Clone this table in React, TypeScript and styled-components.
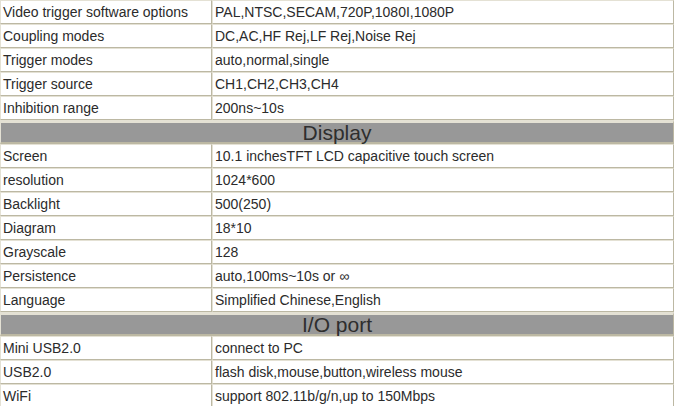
import React from "react";
import styled, { createGlobalStyle } from "styled-components";

const Global = createGlobalStyle`
  html, body { margin: 0; padding: 0; background: #ffffff; }
  body { font-family: "Liberation Sans", Arial, sans-serif; }
`;

const Table = styled.table`
  width: 674px;
  table-layout: fixed;
  border-collapse: separate;
  border-spacing: 0;
  margin-top: 0;
  color: #2b2b2b;
  font-size: 14px;
`;

const Row = styled.tr`
  height: 24px;
`;

const Cell = styled.td`
  box-sizing: border-box;
  height: 24px;
  padding: 0 0 0 2px;
  border-top: 1px solid #e4e1d4;
  border-left: 1px solid #e4e1d4;
  border-right: 1px solid #bcb8a3;
  border-bottom: 1px solid #bcb8a3;
  white-space: nowrap;
  overflow: hidden;
  vertical-align: middle;
  line-height: 16px;
`;

const Section = styled.td`
  box-sizing: border-box;
  height: 24px;
  padding: 0;
  background: #989898;
  text-align: center;
  font-size: 21px;
  color: #2e2e2e;
  border-top: 3px solid #e4e1d4;
  border-bottom: 2px solid #bcb8a3;
  border-left: 1px solid #e4e1d4;
  border-right: 1px solid #bcb8a3;
  vertical-align: middle;
  line-height: 19px;
`;

type Item = { label: string; value: string } | { section: string };

const items: Item[] = [
  { label: "Video trigger software options", value: "PAL,NTSC,SECAM,720P,1080I,1080P" },
  { label: "Coupling modes", value: "DC,AC,HF Rej,LF Rej,Noise Rej" },
  { label: "Trigger modes", value: "auto,normal,single" },
  { label: "Trigger source", value: "CH1,CH2,CH3,CH4" },
  { label: "Inhibition range", value: "200ns~10s" },
  { section: "Display" },
  { label: "Screen", value: "10.1 inchesTFT LCD capacitive touch screen" },
  { label: "resolution", value: "1024*600" },
  { label: "Backlight", value: "500(250)" },
  { label: "Diagram", value: "18*10" },
  { label: "Grayscale", value: "128" },
  { label: "Persistence", value: "auto,100ms~10s or ∞" },
  { label: "Language", value: "Simplified Chinese,English" },
  { section: "I/O port" },
  { label: "Mini USB2.0", value: "connect to PC" },
  { label: "USB2.0", value: "flash disk,mouse,button,wireless mouse" },
  { label: "WiFi", value: "support 802.11b/g/n,up to 150Mbps" },
];

export default function App() {
  return (
    <>
      <Global />
      <Table>
        <colgroup>
          <col style={{ width: 212 }} />
          <col />
        </colgroup>
        <tbody>
          {items.map((it, i) =>
            "section" in it ? (
              <Row key={i}>
                <Section colSpan={2}>{it.section}</Section>
              </Row>
            ) : (
              <Row key={i}>
                <Cell>{it.label}</Cell>
                <Cell>{it.value}</Cell>
              </Row>
            )
          )}
        </tbody>
      </Table>
    </>
  );
}
